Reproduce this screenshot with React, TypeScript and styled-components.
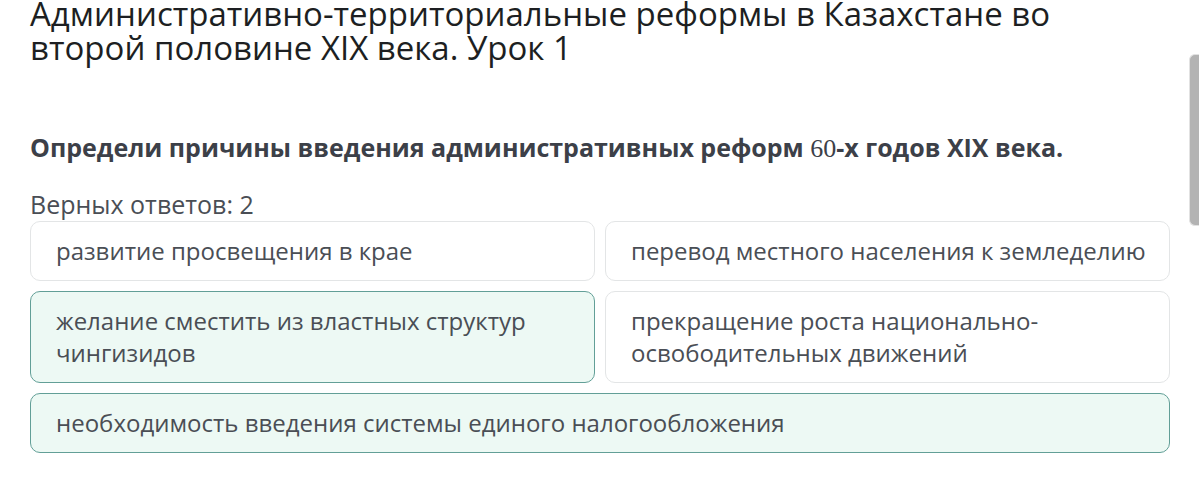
import React, { FC } from 'react';
import styled, { createGlobalStyle } from 'styled-components';

interface Option {
  text: string;
  selected: boolean;
  wide?: boolean;
}

const options: Option[] = [
  { text: 'развитие просвещения в крае', selected: false },
  { text: 'перевод местного населения к земледелию', selected: false },
  { text: 'желание сместить из властных структур чингизидов', selected: true },
  { text: 'прекращение роста национально-освободительных движений', selected: false },
  { text: 'необходимость введения системы единого налогообложения', selected: true, wide: true },
];

const App: FC = () => {
  return (
    <Page>
      <GlobalStyle />
      <Title>
        Административно-территориальные реформы в Казахстане во
        <br />
        второй половине XIX века. Урок 1
      </Title>
      <Question>
        Определи причины введения административных реформ <MathNum>60</MathNum>-х годов XIX века.
      </Question>
      <Counter>Верных ответов: 2</Counter>
      <OptionGrid>
        {options.map((option) => (
          <OptionCard key={option.text} selected={option.selected} wide={option.wide}>
            {option.text}
          </OptionCard>
        ))}
      </OptionGrid>
      <ScrollThumb />
    </Page>
  );
};

const GlobalStyle = createGlobalStyle`
  html, body {
    margin: 0;
    padding: 0;
    background: #ffffff;
    overflow: hidden;
  }
  body {
    font-family: 'Open Sans', 'Noto Sans', sans-serif;
  }
`;

const Page = styled.div`
  position: relative;
  width: 1199px;
  height: 502px;
  padding: 0 30px;
  box-sizing: border-box;
`;

const Title = styled.h1`
  margin: -3px 0 0;
  font-size: 33px;
  line-height: 34px;
  font-weight: 400;
  color: #1d1f22;
`;

const Question = styled.p`
  margin: 67px 0 0;
  font-size: 25px;
  line-height: 30px;
  font-weight: 700;
  color: #3c4048;
`;

const MathNum = styled.span`
  font-family: 'Liberation Serif', 'DejaVu Serif', serif;
  font-weight: 400;
  font-size: 26px;
`;

const Counter = styled.p`
  margin: 25px 0 0;
  font-size: 25px;
  line-height: 30px;
  color: #4a4e55;
`;

const OptionGrid = styled.div`
  display: grid;
  grid-template-columns: 565px 565px;
  gap: 10px;
  margin-top: 2px;
`;

const OptionCard = styled.div<{ selected: boolean; wide?: boolean }>`
  grid-column: ${({ wide }) => (wide ? '1 / -1' : 'auto')};
  box-sizing: border-box;
  padding: 13px 20px 13px 25px;
  border-radius: 10px;
  border: 1px solid ${({ selected }) => (selected ? '#629f97' : '#e3e5e6')};
  background: ${({ selected }) => (selected ? '#edf9f4' : '#ffffff')};
  font-size: 24px;
  line-height: 32px;
  color: #4a4e55;
`;

const ScrollThumb = styled.div`
  position: absolute;
  top: 57px;
  right: 0;
  width: 9px;
  height: 170px;
  border-radius: 6px 0 0 6px;
  background: #b3b3b3;
  border: 1px solid #e2e2e2;
  border-right: none;
`;

export default App;
